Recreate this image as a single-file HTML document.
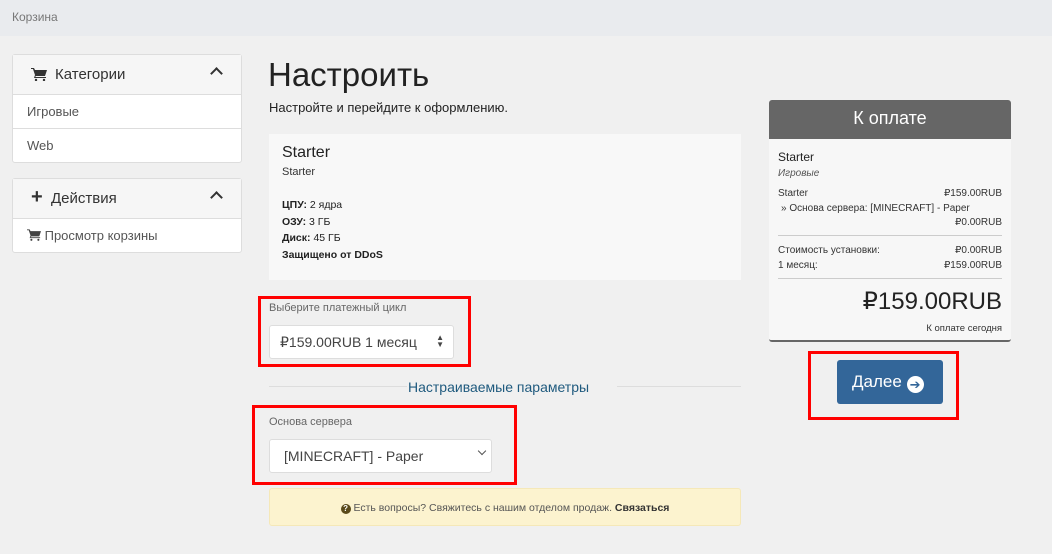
<!DOCTYPE html><html><head><meta charset="utf-8"><style>
*{box-sizing:border-box;margin:0;padding:0}
body{width:1052px;height:554px;background:#f0f0f0;font-family:"Liberation Sans","DejaVu Sans",sans-serif;color:#333;position:relative;overflow:hidden}
.a{position:absolute}
.panel{background:#fff;border:1px solid #ddd;border-radius:3px}
.ph{background:#f6f6f6;border-bottom:1px solid #ddd;height:40px;font-size:15px;padding:11px 0 0 18px;position:relative}
.it{height:34px;border-bottom:1px solid #ddd;font-size:13px;padding:9px 0 0 14px;color:#555}
.car{position:absolute;right:20px;top:14px;width:9px;height:9px;border-left:2.5px solid #333;border-top:2.5px solid #333;transform:rotate(45deg)}
.red{position:absolute;border:3px solid #f00}
.sel{position:absolute;background:#fff;border:1px solid #ddd;border-radius:3px;font-size:14px;color:#444}
.row{display:flex;justify-content:space-between;font-size:10px;color:#333}
</style></head><body>
<div class="a" style="left:0;top:0;width:1052px;height:36px;background:#e9ebee"></div>
<div class="a" style="left:12px;top:10px;font-size:12px;color:#777">Корзина</div>

<div class="a panel" style="left:12px;top:54px;width:230px;height:109px">
<div class="ph"><svg width="16" height="13" viewBox="0 0 16 13" style="position:absolute;left:18px;top:13px"><path d="M0 0h3l1 2h12l-2 6H5l-1 1h11v1H3l1-3L2 1H0z" fill="#333"/><circle cx="5" cy="12" r="1.2" fill="#333"/><circle cx="13" cy="12" r="1.2" fill="#333"/></svg><span style="margin-left:24px">Категории</span><div class="car"></div></div>
<div class="it">Игровые</div><div class="it" style="border:0">Web</div></div>

<div class="a panel" style="left:12px;top:178px;width:230px;height:75px">
<div class="ph"><span style="position:absolute;left:18px;top:7px;font-size:20px;font-weight:bold">+</span><span style="margin-left:20px">Действия</span><div class="car"></div></div>
<div class="it" style="border:0;padding-left:14px"><svg width="14" height="12" viewBox="0 0 16 13" style="vertical-align:-1px"><path d="M0 0h3l1 2h12l-2 6H5l-1 1h11v1H3l1-3L2 1H0z" fill="#444"/><circle cx="5" cy="12" r="1.2" fill="#444"/><circle cx="13" cy="12" r="1.2" fill="#444"/></svg> Просмотр корзины</div></div>

<div class="a" style="left:268px;top:56px;font-size:33px;color:#222">Настроить</div>
<div class="a" style="left:269px;top:100px;font-size:13px;color:#222">Настройте и перейдите к оформлению.</div>

<div class="a" style="left:269px;top:134px;width:472px;height:146px;background:#f8f8f8;padding:10px 13px">
<div style="font-size:16px;color:#222">Starter</div>
<div style="font-size:11px;margin-top:4px">Starter</div>
<div style="font-size:10.5px;line-height:16.5px;margin-top:19px;color:#222"><b>ЦПУ:</b> 2 ядра<br><b>ОЗУ:</b> 3 ГБ<br><b>Диск:</b> 45 ГБ<br><b>Защищено от DDoS</b></div></div>

<div class="red" style="left:258px;top:296px;width:213px;height:71px"></div>
<div class="a" style="left:269px;top:302px;font-size:11px;color:#666">Выберите платежный цикл</div>
<div class="sel" style="left:269px;top:325px;width:185px;height:34px;padding:8px 0 0 10px">₽159.00RUB 1 месяц<span style="position:absolute;right:9px;top:8px;font-size:8px;line-height:7px">▲<br>▼</span></div>

<div class="a" style="left:269px;top:386px;width:138px;border-top:1px solid #ddd"></div>
<div class="a" style="left:617px;top:386px;width:124px;border-top:1px solid #ddd"></div>
<div class="a" style="left:408px;top:379px;font-size:14px;color:#1f5a7e">Настраиваемые параметры</div>

<div class="red" style="left:252px;top:405px;width:265px;height:80px"></div>
<div class="a" style="left:269px;top:416px;font-size:11px;color:#666">Основа сервера</div>
<div class="sel" style="left:269px;top:439px;width:223px;height:34px;padding:8px 0 0 14px">[MINECRAFT] - Paper<span style="position:absolute;right:6px;top:8px;width:6px;height:6px;border-right:1.5px solid #555;border-bottom:1.5px solid #555;transform:rotate(45deg)"></span></div>

<div class="a" style="left:269px;top:488px;width:472px;height:38px;background:#fcf3cf;border:1px solid #f5e8b8;border-radius:3px;font-size:10.5px;text-align:center;padding-top:13px;color:#555"><span style="display:inline-block;width:10px;height:10px;border-radius:50%;background:#5a4a1a;color:#fff;font-size:8px;line-height:10px;font-weight:bold">?</span> Есть вопросы? Свяжитесь с нашим отделом продаж. <b style="color:#333">Связаться</b></div>

<div class="a" style="left:769px;top:100px;width:242px;height:242px;background:#f7f7f7;border-radius:3px;border-bottom:2px solid #666;overflow:hidden">
<div style="height:39px;background:#666;color:#fff;font-size:18px;text-align:center;padding-top:8px">К оплате</div>
<div style="padding:11px 9px 0 9px">
<div style="font-size:12px;color:#222">Starter</div>
<div style="font-size:10px;font-style:italic;color:#555;margin-top:4px">Игровые</div>
<div class="row" style="margin-top:9px"><span>Starter</span><span>₽159.00RUB</span></div>
<div style="font-size:10px;margin-top:4px;padding-left:3px">» Основа сервера: [MINECRAFT] - Paper</div>
<div style="font-size:10px;text-align:right;margin-top:3px">₽0.00RUB</div>
<div style="border-top:1px solid #ccc;margin-top:7px"></div>
<div class="row" style="margin-top:9px"><span>Стоимость установки:</span><span>₽0.00RUB</span></div>
<div class="row" style="margin-top:4px"><span>1 месяц:</span><span>₽159.00RUB</span></div>
<div style="border-top:1px solid #ccc;margin-top:7px"></div>
<div style="text-align:right;font-size:24px;margin-top:8px;color:#222">₽159.00RUB</div>
<div style="text-align:right;font-size:9.5px;margin-top:7px">К оплате сегодня</div>
</div></div>

<div class="red" style="left:808px;top:351px;width:151px;height:69px"></div>
<div class="a" style="left:837px;top:360px;width:106px;height:44px;background:#336699;border-radius:3px;color:#fff;font-size:17px;padding:12px 0 0 15px">Далее <span style="display:inline-block;width:17px;height:17px;border-radius:50%;background:#fff;color:#336699;font-size:13px;line-height:17px;text-align:center;font-weight:bold;vertical-align:-2px">➔</span></div>
</body></html>
